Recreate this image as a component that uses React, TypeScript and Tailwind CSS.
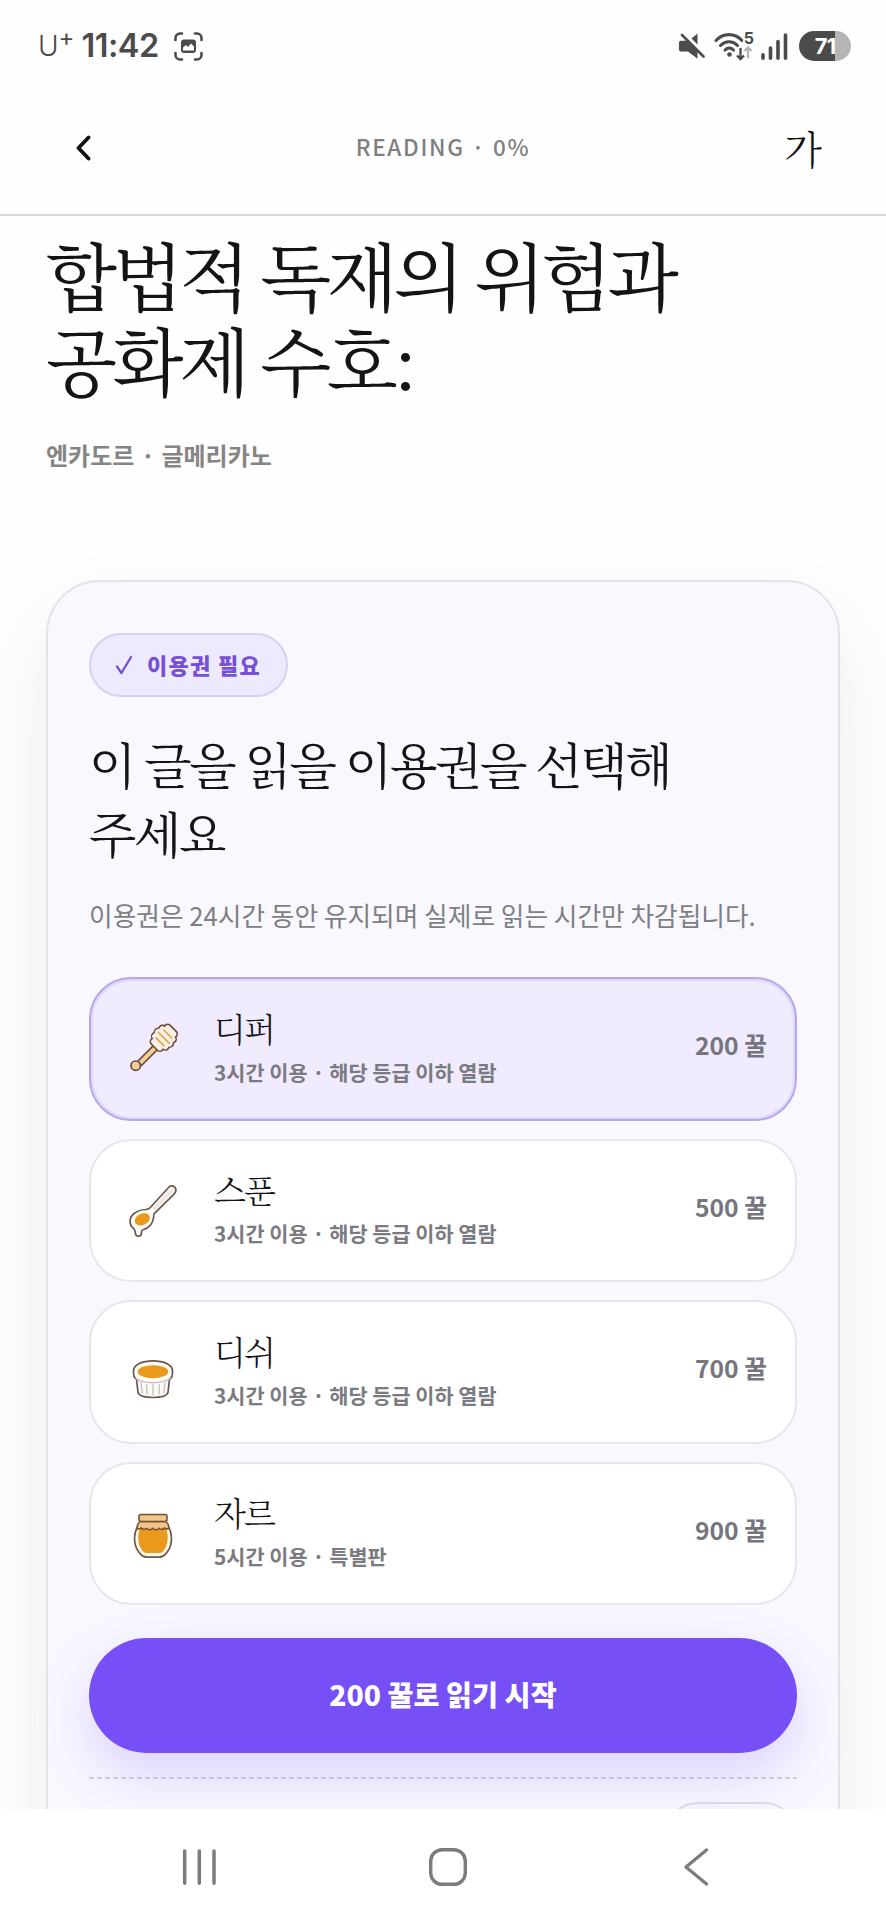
import React from "react";
import clsx from "clsx";

const DipperIcon = () => (
  <svg width="60" height="60" viewBox="0 0 60 60" fill="none" strokeLinecap="round" strokeLinejoin="round">
    <path d="M14.5 42.5L32 25l4 4L18.5 46.5z" fill="#f3cf98" stroke="#6b4a3c" strokeWidth="1.7" />
    <circle cx="12.7" cy="46.7" r="4.7" fill="#f3cf98" stroke="#6b4a3c" strokeWidth="1.7" />
    <g transform="translate(40.8 18.8) rotate(45)">
      <g fill="#fdf0e6" stroke="#6b4a3c" strokeWidth="3.2">
        <rect x="-7" y="-12.5" width="14" height="5.5" rx="2.7" />
        <rect x="-10" y="-8" width="20" height="5.5" rx="2.7" />
        <rect x="-11" y="-3" width="22" height="5.5" rx="2.7" />
        <rect x="-10" y="2" width="20" height="5.5" rx="2.7" />
        <rect x="-7" y="7" width="14" height="5.5" rx="2.7" />
      </g>
      <g fill="#fdf0e6">
        <rect x="-7" y="-12.5" width="14" height="6" rx="2.7" />
        <rect x="-10" y="-8" width="20" height="6" rx="2.7" />
        <rect x="-11" y="-3" width="22" height="6" rx="2.7" />
        <rect x="-10" y="2" width="20" height="6" rx="2.7" />
        <rect x="-7" y="7" width="14" height="5.5" rx="2.7" />
      </g>
      <path d="M-5.5 -5.5h11M-7.5 0h15M-5.5 5.500h11" stroke="#e3a552" strokeWidth="1.7" />
    </g>
  </svg>
);

const SpoonIcon = () => (
  <svg width="60" height="60" viewBox="0 0 60 60" fill="none" strokeLinecap="round" strokeLinejoin="round">
    <path
      d="M46.5 6.5c3.400-2.200 7.700 1.500 6 5.400-.4 1-1.300 1.900-2.200 2.900L31.500 33.300c-.8 1-.9 2.300-.9 3.700-.2 6-4.500 11-10.100 12.500-1.300.4-2 .9-2 2.300v1c0 4.600-6 4.600-6.200 0-.1-2.200-.3-3.300-1.700-4.300-5-3.600-4.500-11.200.5-15 3.600-2.800 7.400-3.800 11.400-4 1.800-.2 3.200-.3 4.300-1.500z"
      fill="#fffdf8"
      stroke="#6b5650"
      strokeWidth="1.7"
    />
    <path d="M47.5 8.700c2-1.200 4.200.8 3 2.800L32 30.700l-2.800-2.600z" fill="#efe8e4" />
    <ellipse cx="19.3" cy="39.3" rx="8" ry="5.7" transform="rotate(-24 19.3 39.3)" fill="#e99a1c" />
  </svg>
);

const DishIcon = () => (
  <svg width="60" height="60" viewBox="0 0 60 60" fill="none" strokeLinecap="round" strokeLinejoin="round">
    <path
      d="M12.500 28l2.500 22.500C16 54 23 55.500 30 55.500S44 54 45 50.500L47.500 28z"
      fill="#fbfaf9"
      stroke="#6b5650"
      strokeWidth="1.7"
    />
    <path
      d="M18 41l1.200 9.500M23.500 42.500l.6 9.700M30 43v10M36.500 42.500l-.6 9.700M42 41l-1.200 9.500"
      stroke="#c3bfbd"
      strokeWidth="1.3"
    />
    <path d="M10.500 29c0-6.300 8.500-10.200 19.500-10.200S49.500 22.700 49.500 29v2.500c0 5.200-8.500 9-19.500 9s-19.500-3.800-19.500-9z" fill="#fffaf3" />
    <path
      d="M12.500 36.500c-1.500-1.200-2-3-2-5V29c0-6.300 8.500-10.200 19.500-10.200S49.500 22.700 49.500 29v2.500c0 2-.5 3.800-2 5"
      stroke="#6b5650"
      strokeWidth="1.7"
    />
    <path d="M13 36.500c3.500 2.700 9.500 4.200 17 4.200s13.500-1.500 17-4.200" stroke="#c5bfce" strokeWidth="1.4" />
    <ellipse cx="30" cy="29.7" rx="15.2" ry="6.500" fill="#e99a1c" />
  </svg>
);

const JarIcon = () => (
  <svg width="60" height="60" viewBox="0 0 60 60" fill="none" strokeLinecap="round" strokeLinejoin="round">
    <path
      d="M15 23c-3 5-3.700 10-3.400 14.500.4 6.500 4 12 7.400 15 1.700 1.500 4 1.700 7 1.700h8c3 0 5.300-.2 7-1.700 3.400-3 7-8.500 7.400-15C48.700 33 48 28 45 23z"
      fill="#fff8e9"
      stroke="#6b5650"
      strokeWidth="1.7"
    />
    <path
      d="M17 25c-2.500 7-2.500 14.500 1 20.500 1.600 2.900 3 4.500 5.500 4.500h13c2.500 0 3.900-1.600 5.500-4.500 3.500-6 3.500-13.500 1-20.500z"
      fill="#e99a1c"
    />
    <path
      d="M17 18.500c-2 2-3.300 4.500-2.800 7 1.300.8 2.800.6 4-.7 1.200 2 4 2 5.500.4 1.500 2 4.600 2 6.100 0 1.500 2 4.600 2 6.100 0 1.500 1.600 4.300 1.600 5.500-.4 1.200 1.300 2.700 1.500 4 .7.800-2.500-.4-5-2.400-7z"
      fill="#f0c48a"
      stroke="#7a4e30"
      strokeWidth="1.5"
    />
    <rect x="16" y="11.5" width="28" height="7" rx="2" fill="#f0c48a" stroke="#7a4e30" strokeWidth="1.6" />
  </svg>
);

const passes = [
  {
    name: "디퍼",
    time: "3시간 이용",
    scope: "해당 등급 이하 열람",
    price: 200,
    icon: <DipperIcon />,
  },
  {
    name: "스푼",
    time: "3시간 이용",
    scope: "해당 등급 이하 열람",
    price: 500,
    icon: <SpoonIcon />,
  },
  {
    name: "디쉬",
    time: "3시간 이용",
    scope: "해당 등급 이하 열람",
    price: 700,
    icon: <DishIcon />,
  },
  {
    name: "자르",
    time: "5시간 이용",
    scope: "특별판",
    price: 900,
    icon: <JarIcon />,
  },
];

const StatusBar = () => (
  <div className="flex h-[92px] shrink-0 items-center justify-between pl-[38px] pr-[35px] text-[#4b4b4b]">
    <div className="flex items-center font-['Inter',sans-serif]">
      <span className="text-[28px] font-light leading-none">U</span>
      <span className="-mt-4 text-[24px] leading-none">+</span>
      <span className="ml-[7px] text-[32.5px] font-semibold leading-none tracking-[-0.5px]">11:42</span>
      <svg className="ml-[15px]" width="29" height="29" viewBox="0 0 29 29" fill="none">
        <path
          d="M1.5 8V6A4.500 4.500 0 0 1 6 1.500h2M21 1.500h2A4.500 4.500 0 0 1 27.500 6v2M27.500 21v2a4.500 4.500 0 0 1-4.500 4.500h-2M8 27.500H6A4.500 4.500 0 0 1 1.500 23v-2"
          stroke="#4b4b4b"
          strokeWidth="2.6"
          strokeLinecap="round"
        />
        <rect x="7" y="7.5" width="15" height="13.5" rx="3" fill="#4b4b4b" />
        <path d="M9 18.5v-3l3-2.500 2 2 3-3.500 3 3v4z" fill="#fff" />
      </svg>
    </div>
    <div className="flex items-center">
      <svg width="26" height="27" viewBox="0 0 26 27" fill="none">
        <path d="M1.8 7.700H8L18.500 18v7.800L9 18.500H1.800Q0 18.500 0 16.700V9.500Q0 7.700 1.800 7.700z" fill="#4b4b4b" />
        <path d="M18.5.5v11l-6-6z" fill="#4b4b4b" />
        <path d="M3 2l21.500 21.500" stroke="#4b4b4b" strokeWidth="2.6" strokeLinecap="round" />
      </svg>
      <div className="relative ml-2">
        <svg width="42" height="30" viewBox="0 0 42 30" fill="none">
          <path
            d="M3 9.500c7.500-7.800 18.500-7.800 26 0M7.500 14.500c5-5 12-5 17 0M12 19c2.500-2.500 6-2.500 8.500 0"
            stroke="#4b4b4b"
            strokeWidth="3.1"
            strokeLinecap="round"
          />
          <circle cx="16.5" cy="23.5" r="2.3" fill="#4b4b4b" />
          <path d="M27.500 17v10.500M24 24.500l3.500 3.500 3.500-3.500" stroke="#4b4b4b" strokeWidth="2.3" />
          <path d="M35 27V17M31.500 20l3.500-3.500 3.500 3.500" stroke="#b5b5b5" strokeWidth="2.3" />
        </svg>
        <span className="absolute -top-[1px] right-[1px] bg-[#fefefe] pl-px font-['Inter',sans-serif] text-[16px] font-bold leading-4">
          5
        </span>
      </div>
      <svg className="ml-[6px]" width="27" height="27" viewBox="0 0 27 27" stroke="#4b4b4b" strokeWidth="3.6" strokeLinecap="round">
        <path d="M2 21.700v3.500M9.500 15v10.200M17 8.500v16.700M24.500 2v23.200" />
      </svg>
      <div className="ml-[11px] flex h-[30px] w-[52px] items-center justify-center rounded-full bg-linear-to-r from-[#4b4b4b] from-70% to-[#b5b5b5] to-70% font-['Inter',sans-serif] text-[22px] font-bold leading-none tracking-[-1px] text-white">
        71
      </div>
    </div>
  </div>
);

const ReadingHeader = () => (
  <header className="grid h-[124px] shrink-0 grid-cols-3 items-center border-b-2 border-[#d6d6d6] px-[64px] pb-[10px]">
    <svg className="ml-3" width="16" height="26" viewBox="0 0 16 26" fill="none">
      <path d="M12.500 2.500L2.500 13l10 10.500" stroke="#111" strokeWidth="3.8" strokeLinecap="round" strokeLinejoin="round" />
    </svg>
    <span className="-mt-0.5 whitespace-nowrap text-center text-[22.5px] font-medium tracking-[1.7px] text-[#7f7f7f]">
      READING · 0%
    </span>
    <span className="justify-self-end pb-0.5 font-['Noto_Serif_CJK_KR','Noto_Sans_CJK_KR',serif] text-[39px] font-light leading-none text-[#111]">
      가
    </span>
  </header>
);

const NavBar = () => (
  <nav className="flex h-[111px] shrink-0 items-center justify-between bg-white pl-[181px] pr-[177px] pt-[5px] text-[#7c7c7c]">
    <svg width="36" height="38" viewBox="0 0 36 38" fill="none" stroke="currentColor" strokeWidth="3.5" strokeLinecap="round">
      <path d="M3.700 3v32.200M18.300 3v32.200M33 3v32.200" />
    </svg>
    <svg className="-ml-[5px]" width="38" height="38" viewBox="0 0 38 38" fill="none">
      <rect x="1.7" y="1.7" width="34.6" height="34.6" rx="11.5" stroke="currentColor" strokeWidth="3.4" />
    </svg>
    <svg width="25" height="38" viewBox="0 0 25 38" fill="none">
      <path d="M22.500 2L2 19l20.500 17" stroke="currentColor" strokeWidth="3.3" strokeLinecap="round" strokeLinejoin="round" />
    </svg>
  </nav>
);

export default function App() {
  const selected = 0;

  return (
    <div className="flex h-[1920px] w-[886px] flex-col overflow-hidden bg-[#fefefe] font-['Noto_Sans_CJK_KR',sans-serif]">
      <StatusBar />
      <ReadingHeader />
      <main className="flex-1 overflow-hidden px-[46px] pt-[15px]">
        <h1 className="font-['Noto_Serif_CJK_KR','Noto_Sans_CJK_KR',serif] text-[73.5px] font-normal leading-[85px] tracking-[-4.4px] text-[#141414]">
          합법적 독재의 위험과
          <br />
          공화제 수호:
        </h1>
        <p className="mt-[36px] text-[24px] font-bold leading-[36px] text-[#858585]">
          엔카도르<span className="mx-px"> · </span>글메리카노
        </p>

        <section className="mt-[107px] h-[1400px] rounded-[54px] border-2 border-[#e4e3e8] bg-[#f9f8ff] px-[41px] pt-[51px] shadow-[0_40px_90px_rgba(0,0,0,0.07)]">
          <div className="flex h-16 w-[199px] items-center rounded-full border-2 border-[#d8d0f3] bg-[#eeeafe] pl-6">
            <svg width="18" height="22" viewBox="0 0 18 22" fill="none">
              <path d="M2 12.500l4.500 6.500L16 3" stroke="#7650d8" strokeWidth="2.3" strokeLinecap="round" strokeLinejoin="round" />
            </svg>
            <span className="-mt-0.5 ml-[14px] text-[22px] font-black leading-none tracking-[1.3px] text-[#7650d8]">
              이용권 필요
            </span>
          </div>

          <h2 className="mt-[32px] font-['Noto_Serif_CJK_KR','Noto_Sans_CJK_KR',serif] text-[49px] font-normal leading-[69px] tracking-[-2.3px] text-[#141418]">
            이 글을 읽을 이용권을 선택해
            <br />
            주세요
          </h2>
          <p className="mt-[30px] whitespace-nowrap text-[25.7px] leading-[36px] text-[#7f7f83]">
            이용권은 24시간 동안 유지되며 실제로 읽는 시간만 차감됩니다.
          </p>

          <div className="mt-[44px] flex flex-col gap-[18px]">
            {passes.map(({ name, time, scope, price, icon }, i) => (
              <button
                key={name}
                className={clsx(
                  "flex h-[143.5px] items-center rounded-[42px] border-2 pl-8 pr-[28px] text-left",
                  i === selected
                    ? "border-[#b6a7ea] bg-[#f0ebff] shadow-[inset_0_0_0_2px_#e0d8fb]"
                    : "border-[#e7e6ec] bg-white"
                )}
              >
                {icon}
                <div className="ml-[31px] flex flex-1 flex-col">
                  <span className="-mt-px font-['Noto_Serif_CJK_KR','Noto_Sans_CJK_KR',serif] text-[33px] font-light leading-[46px] tracking-[-1.8px] text-[#141418]">
                    {name}
                  </span>
                  <span className="mt-px text-[20.8px] font-bold leading-[40px] text-[#7b7a80]">
                    {time} · {scope}
                  </span>
                </div>
                <span className="-mt-2 text-[24.7px] font-bold text-[#77757c]">{price} 꿀</span>
              </button>
            ))}
          </div>

          <button className="mt-[33px] h-[115px] w-full rounded-full bg-[#764ff7] pb-0.5 text-[28.3px] font-black text-white shadow-[0_22px_54px_rgba(118,79,247,0.22)]">
            200 꿀로 읽기 시작
          </button>

          <div className="mt-6 h-[2px] bg-[repeating-linear-gradient(90deg,#d5cfe2_0_5px,transparent_5px_8px)]" />
          <div className="ml-auto mt-[23px] h-[66px] w-[132px] rounded-full border-2 border-[#dedae8] bg-[#f8f6ff]" />
        </section>
      </main>
      <NavBar />
    </div>
  );
}
